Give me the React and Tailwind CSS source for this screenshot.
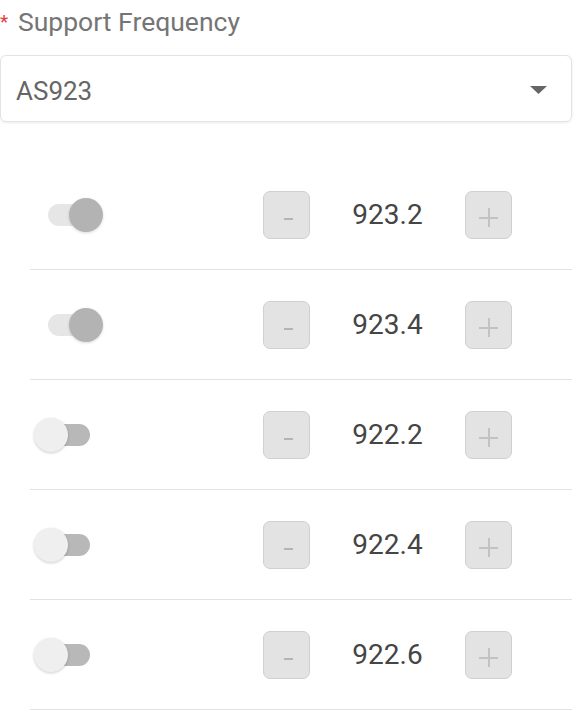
import React from 'react'

const rows = [
  { on: true, value: '923.2' },
  { on: true, value: '923.4' },
  { on: false, value: '922.2' },
  { on: false, value: '922.4' },
  { on: false, value: '922.6' },
]

function Toggle({ on }) {
  return (
    <div className="relative w-[70px] h-[36px] ml-[4px] shrink-0">
      {on ? (
        <>
          <div className="absolute left-[14px] top-[7px] w-[52px] h-[22px] rounded-full bg-[#e6e6e6]" />
          <div className="absolute left-[35px] top-[1px] w-[34px] h-[34px] rounded-full bg-[#b3b3b3] shadow-[0_1px_3px_rgba(0,0,0,0.15)]" />
        </>
      ) : (
        <>
          <div className="absolute left-[6px] top-[7px] w-[50px] h-[22px] rounded-full bg-[#b8b8b8]" />
          <div className="absolute left-0 top-[1px] w-[34px] h-[34px] rounded-full bg-[#efefef] shadow-[0_1px_3px_rgba(0,0,0,0.2)]" />
        </>
      )}
    </div>
  )
}

function StepButton({ plus }) {
  return (
    <div className="w-[47px] h-[48px] shrink-0 rounded-[7px] bg-[#e3e3e3] border border-[#d0d0d0] flex items-center justify-center">
      {plus ? (
        <div className="relative w-[19px] h-[19px] translate-y-[3px]">
          <div className="absolute left-0 top-[8.5px] w-[19px] h-[2px] bg-[#c2c2c2]" />
          <div className="absolute left-[8.5px] top-0 w-[2px] h-[19px] bg-[#c2c2c2]" />
        </div>
      ) : (
        <div className="w-[9px] h-[2px] bg-[#b5b5b5] translate-x-[2px] translate-y-[4px]" />
      )}
    </div>
  )
}

export default function App() {
  return (
    <div className="w-[576px] h-[714px] bg-white overflow-hidden" style={{ fontFamily: 'Roboto, "Liberation Sans", sans-serif' }}>
      <div className="pt-[5px] text-[26.5px] leading-[34px] text-[#757575] flex">
        <span className="text-[#e53935] text-[19px] w-[18px]">*</span>
        <span>Support Frequency</span>
      </div>

      <div className="mt-[16px] w-[572px] h-[67px] border border-[#e3e3e3] rounded-[6px] shadow-[0_1px_3px_rgba(0,0,0,0.08)] flex items-center justify-between pl-[15px] pr-[24px]">
        <span className="text-[26px] leading-[30px] text-[#666666] translate-y-[2px]">AS923</span>
        <svg width="17" height="8" viewBox="0 0 17 8" className="translate-y-[1px]">
          <path d="M0 0 L17 0 L8.5 8 Z" fill="#666666" />
        </svg>
      </div>

      <div className="mt-[38px] ml-[30px] w-[542px]">
        {rows.map((r, i) => (
          <div key={i} className="h-[110px] border-b border-[#e2e2e2] flex items-center">
            <Toggle on={r.on} />
            <div className="ml-[159px]">
              <StepButton />
            </div>
            <div className="w-[155px] text-center text-[28px] leading-[32px] text-[#454545]">{r.value}</div>
            <StepButton plus />
          </div>
        ))}
      </div>
    </div>
  )
}
